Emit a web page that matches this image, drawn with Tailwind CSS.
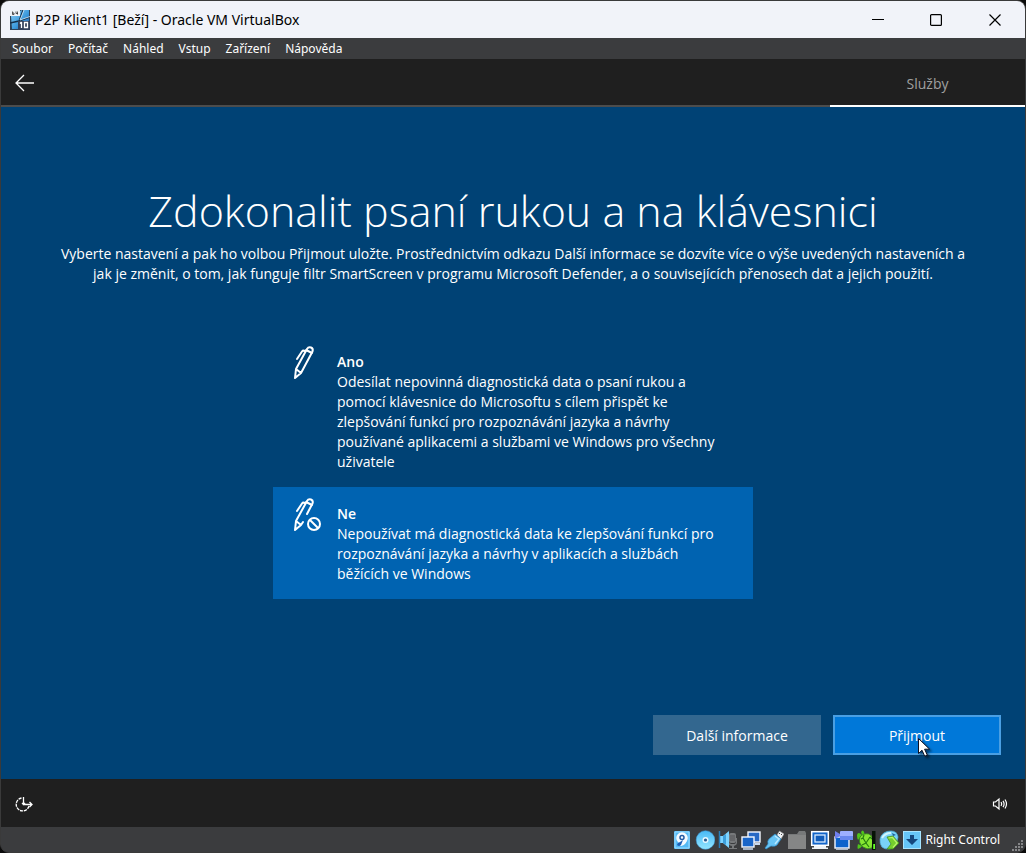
<!DOCTYPE html>
<html lang="cs">
<head>
<meta charset="utf-8">
<meta name="viewport" content="width=device-width, initial-scale=1">
<title>P2P Klient1 [Beží] - Oracle VM VirtualBox</title>
<script src="https://cdn.jsdelivr.net/npm/@tailwindcss/browser@4"></script>
</head>
<body class="bg-[#0c0c0c] font-['Open_Sans','Noto_Sans',sans-serif] text-white">
<div class="flex min-h-screen flex-col overflow-hidden rounded-[9px] border border-[#3a3a3a] bg-[#3b3c3e]">

  <header class="flex h-[37px] shrink-0 items-center bg-[#f1f3f9] text-black">
    <svg class="ml-[9px] size-5" viewBox="0 0 20 20" aria-hidden="true">
      <defs><linearGradient id="win" x1="0" y1="0" x2="1" y2="1"><stop offset="0" stop-color="#8ccdf3"/><stop offset=".55" stop-color="#3d9bdc"/><stop offset="1" stop-color="#1c4f9c"/></linearGradient></defs>
      <rect width="20" height="20" fill="#2d4358"/>
      <path d="M1 6 12 0h7v19H2z" fill="url(#win)"/>
      <path d="M13 0 9 11 12 20M0 13 9 11 20 7" stroke="#14304a" stroke-width="1.300" fill="none"/>
      <path d="M14 0 10 10 20 6.500" stroke="#d9f1ff" stroke-width=".8" fill="none"/>
      <rect width="10" height="6" fill="#eef2f6"/><path d="M2.500 1.500v3M2.500 3h1.500v1.500H2.500M6 1.500v2h2M7.500 1.500v3" stroke="#333" stroke-width=".8" fill="none"/>
      <path d="M8 11h12v9H8z" fill="#33415a"/>
      <path d="M11.500 12v6M10 13.500l1.500-1.500M14.500 12.500h3v5h-3z" stroke="#fff" stroke-width="1.300" fill="none"/>
    </svg>
    <h1 class="ml-[5px] text-[14px] leading-5 whitespace-nowrap font-['Noto_Sans',sans-serif]">P2P Klient1 [Beží] - Oracle VM VirtualBox</h1>
    <div class="ml-auto flex h-full">
      <button class="flex w-[58px] items-center justify-center" aria-label="Minimalizovat"><svg class="size-3" viewBox="0 0 12 12" fill="none" stroke="#000"><path d="M0 5.500h12"/></svg></button>
      <button class="flex w-[58px] items-center justify-center" aria-label="Maximalizovat"><svg class="size-3" viewBox="0 0 12 12" fill="none" stroke="#000" stroke-width="1.200"><rect x=".6" y=".6" width="10.800" height="10.800" rx="1"/></svg></button>
      <button class="flex w-[60px] items-center justify-center" aria-label="Zavřít"><svg class="size-3" viewBox="0 0 12 12" fill="none" stroke="#000" stroke-width="1.200"><path d="m.5.5 11 11M11.500.5l-11 11"/></svg></button>
    </div>
  </header>

  <nav class="flex h-[21px] shrink-0 items-center gap-[15px] bg-[#3b3c3e] pl-[11px] text-[12px] leading-4 font-['Noto_Sans',sans-serif]" aria-label="Nabídka">
    <button>Soubor</button><button>Počítač</button><button>Náhled</button><button>Vstup</button><button>Zařízení</button><button>Nápověda</button>
  </nav>

  <div class="flex h-12 shrink-0 items-stretch bg-[#1f1f1f]">
    <div class="flex flex-1 items-center border-b-2 border-[#4c4c4c] pl-[14px]">
      <button aria-label="Zpět"><svg class="h-5 w-5" viewBox="0 0 20 20" fill="none" stroke="#fff" stroke-width="1.300"><path d="M1 11h18M9 3 1 11l8 8"/></svg></button>
    </div>
    <div class="flex w-[195px] items-center justify-center border-b-2 border-white pt-[3px] text-[14px] leading-5 text-[#a0a0a0]">Služby</div>
  </div>

  <main class="flex flex-1 flex-col bg-[#004275] px-6 pt-[74px] pb-6">
    <h2 class="text-center text-[43px] leading-[60px] font-light">Zdokonalit psaní rukou a na klávesnici</h2>
    <p class="mt-[3px] text-center text-[14px] leading-5">Vyberte nastavení a pak ho volbou Přijmout uložte. Prostřednictvím odkazu Další informace se dozvíte více o výše uvedených nastaveních a<br>jak je změnit, o tom, jak funguje filtr SmartScreen v programu Microsoft Defender, a o souvisejících přenosech dat a jejich použití.</p>

    <div class="mx-auto mt-[50px] w-full max-w-[480px]" role="radiogroup" aria-label="Psaní rukou a na klávesnici">
      <label class="flex items-start gap-4 px-4 pt-[17px] pb-[15px]">
        <input type="radio" name="inking" class="sr-only">
        <svg class="-mt-[6px] h-9 w-8 shrink-0" viewBox="0 0 32 36" fill="none" stroke="#fff" stroke-width="2" stroke-linejoin="round" stroke-linecap="round" aria-hidden="true"><path d="M6 33 7 24 18 4q1.500-2.500 4-1.500t1.500 4L12 28zM7 24l5 4M16 6q-2-1-3 .5L8 14M17 5l6 3"/></svg>
        <span class="pt-[1px] text-[14px] leading-5"><strong class="font-semibold">Ano</strong><br>Odesílat nepovinná diagnostická data o psaní rukou a<br>pomocí klávesnice do Microsoftu s cílem přispět ke<br>zlepšování funkcí pro rozpoznávání jazyka a návrhy<br>používané aplikacemi a službami ve Windows pro všechny<br>uživatele</span>
      </label>
      <label class="flex items-start gap-4 bg-[#0063b1] px-4 pt-4 pb-[15px]">
        <input type="radio" name="inking" class="sr-only" checked>
        <svg class="-mt-[6px] h-9 w-8 shrink-0" viewBox="0 0 32 36" fill="none" stroke="#fff" stroke-width="2" stroke-linejoin="round" stroke-linecap="round" aria-hidden="true"><path d="M14 25 12 28 6 33 7 24 18 4q1.500-2.500 4-1.500t1.500 4L18 17M7 24l5 4M16 6q-2-1-3 .5L8 14M17 5l6 3"/><circle cx="25" cy="27" r="6"/><path d="m21 23 8 8"/></svg>
        <span class="pt-[1px] text-[14px] leading-5"><strong class="font-semibold">Ne</strong><br>Nepoužívat má diagnostická data ke zlepšování funkcí pro<br>rozpoznávání jazyka a návrhy v aplikacích a službách<br>běžících ve Windows</span>
      </label>
    </div>

    <div class="mt-auto flex justify-end gap-3 text-[14px] leading-5">
      <button class="h-10 w-[168px] bg-[#33678f] pt-px">Další informace</button>
      <button class="relative h-10 w-[168px] border-2 border-[#4a9fe3] bg-[#0078d9] pt-px">Přijmout
        <svg class="absolute top-5 left-[82px] h-[22px] w-4 drop-shadow-[2px_2px_1px_rgba(0,0,0,0.5)]" viewBox="0 0 16 22" aria-hidden="true"><path d="M1.500 1.500v15l3.500-3.300 2.700 6 2.600-1.100-2.700-5.900h5z" fill="#fff" stroke="#0c1020"/></svg>
      </button>
    </div>
  </main>

  <div class="flex h-12 shrink-0 items-center justify-between bg-[#1f1f1f] pt-px pr-[17px] pl-[14px]">
    <button aria-label="Usnadnění přístupu"><svg class="h-[18px] w-[18px]" viewBox="0 0 18 18" fill="none" stroke="#fff" stroke-width="1.300"><path d="M14 11A6.500 6.500 0 1 1 6.500 3" stroke-dasharray="3.200 .8"/><path d="M8.500 2v7.500H17M14.500 7l2.500 2.500-2.500 2.500M7 8l1.500 1.500L10 8"/></svg></button>
    <button aria-label="Hlasitost"><svg class="h-4 w-4" viewBox="0 0 16 16" fill="none" stroke="#fff" stroke-width="1.200"><path d="M1.500 6h2L7 3v10l-3.500-3h-2zM9 6.200q1.300 1.800 0 3.600M11 4.800q2.200 3.200 0 6.400M13 3.500q3 4.500 0 9"/></svg></button>
  </div>

  <footer class="flex h-[25px] shrink-0 items-center justify-end gap-[3px] bg-[#3b3c3e] pr-px">
    <svg class="size-5" viewBox="0 0 20 20" aria-label="Pevný disk"><rect x="2" y="1" width="16" height="18" rx="1" fill="#54baf5"/><path d="M3 18V2h14v16z" fill="none" stroke="#9edcff"/><circle cx="10" cy="8" r="5.800" fill="#f5faff"/><path d="M15 10q-1 5-6 6l-3-1 6-6z" fill="#f5faff"/><circle cx="10" cy="7.500" r="2" fill="none" stroke="#235ba5" stroke-width="1.500"/><path d="m11 10-2 5q-2 2-4 0 0-2 3-3z" fill="#1d60b7"/></svg>
    <svg class="size-5" viewBox="0 0 20 20" aria-label="Optický disk"><defs><linearGradient id="cd" x2="0" y2="1"><stop stop-color="#48b9f5"/><stop offset="1" stop-color="#94e6ff"/></linearGradient></defs><circle cx="10.500" cy="10" r="9.300" fill="url(#cd)" stroke="#3b9bdc" stroke-width=".5"/><circle cx="10.500" cy="10" r="3" fill="#e7f8ff"/><circle cx="10.500" cy="10" r="1.600" fill="#285c92"/></svg>
    <svg class="size-5" viewBox="0 0 20 20" aria-label="Zvuk"><g fill="#77797b"><rect x="11" y="3" width="7" height="10" rx="2"/><path d="M10 9v4q0 2 4 3v2h-3v1h8v-1h-3v-2q3-1 3-3V8h-1v4q0 2-3 2-4 0-4-2V9z"/></g><path d="M12 6h5M12 8h5M12 10h5" stroke="#4b4d50" stroke-width=".8"/><path d="M2 6h3l6-5v17l-6-5H2z" fill="#7ed4ff"/><path d="M5 6v7l3 2V4z" fill="#3d9fdb"/><path d="M1.500 1v17" stroke="#287eb9" stroke-width="1.500"/></svg>
    <svg class="size-5" viewBox="0 0 20 20" aria-label="Síť"><rect x="7" y="2" width="12" height="10" fill="#2769c6" stroke="#f5f8ff" stroke-width="1.400"/><path d="M14 14h5" stroke="#c9d9ef" stroke-width="2"/><rect x="1" y="7" width="12" height="10" fill="#1764c8" stroke="#f5f8ff" stroke-width="1.400"/><path d="M2 19h10" stroke="#c9d9ef" stroke-width="1.500"/></svg>
    <svg class="size-5" viewBox="0 0 20 20" aria-label="USB"><path d="m13 5 2.500-4L20 4l-3 5z" fill="#f0f2f4" stroke="#999" stroke-width=".6"/><path d="m15 3 1 1m1 0 1 1" stroke="#444"/><path d="m11 4 6 5-4 6q-2 2-6 1l-5 3-1-1 3-4q-1-3 1-5z" fill="#68c5f5" stroke="#2f8cc9" stroke-width=".7"/><path d="m11 6 4 3-4 5" fill="none" stroke="#b7e8ff" stroke-width="1.500"/></svg>
    <svg class="size-5" viewBox="0 0 20 20" aria-label="Sdílené složky"><path d="M1 19V4h9l2-3h6l1 2v16z" fill="#77797a"/><path d="M1 5h18v14H1z" fill="#858686"/></svg>
    <svg class="size-5" viewBox="0 0 20 20" aria-label="Displej"><rect x="1.700" y="1.700" width="16.600" height="13.600" fill="#1264c9" stroke="#fff" stroke-width="1.500"/><rect x="5" y="5" width="10" height="7" fill="#105bb9" stroke="#d8ebff" stroke-width="1.300"/><path d="M4 16h12v1.500h2V19H2v-1.500h2z" fill="#eef2f6"/></svg>
    <svg class="size-5" viewBox="0 0 20 20" aria-label="Nahrávání"><rect x="2" y="7" width="14" height="11" fill="#0c63cb" stroke="#f4f8ff" stroke-width="1.400"/><path d="M3 19.300h12" stroke="#cad8e8"/><path d="m2 1 5 3v2L2 9z" fill="#7080ee"/><rect x="7" y="1" width="13" height="9" rx="1" fill="#9eafff"/><path d="M7 6h13v4H7z" fill="#6987ee"/></svg>
    <svg class="size-5" viewBox="0 0 20 20" aria-label="Virtualizace"><path d="M1 5Q2 1 6 5L2 10q-1-2-1-5zM15 7h4l-3 5zM5 2Q7-1 8 2l1 3H6zM2 14q-1 4 0 5 3-1 4-3z" fill="#4fc51b"/><path d="M4 7q3-4 9-3 4 2 4 7l-1 7q-5 2-9-1-5-4-3-10z" fill="#86e632" stroke="#30851a" stroke-width=".8"/><path d="m7 8 3 5 4-6M10 13l-4 2M10 13l3 4M5 9l2-1 1-3M14 7l2 2" stroke="#267d10" stroke-width="1.200" fill="none"/><path d="M16 1h3.500v19H16z" fill="#071307"/><path d="M17.200 14h1.800v5h-1.800z" fill="#65ff25"/></svg>
    <svg class="size-5" viewBox="0 0 20 20" aria-label="Integrace myši"><path d="M1 9Q3 1 12 1q6 0 7 6-1 9-8 12Q0 20 1 9z" fill="#79d3f8" stroke="#4eacd9" stroke-width=".7"/><path d="M3 8q3-5 9-5" stroke="#d0f5ff" stroke-width="2" fill="none"/><path d="m13 3 4 2-3 1z" fill="#1c619a"/><path d="m8 7 6-1 6 7-6 6H8l4-5z" fill="#75ce2d" stroke="#3c8b1d" stroke-width=".7"/><path d="m9.500 8 4-.500 4.500 5.500-4 4.500" stroke="#b9f36b" stroke-width="1.200" fill="none"/></svg>
    <svg class="size-5" viewBox="0 0 20 20" aria-label="Klávesnice"><rect x="1" y="1" width="18" height="18" rx="1" fill="#66c5f7"/><rect x="1.500" y="1.500" width="17" height="17" fill="none" stroke="#a7e4ff"/><path d="M8 5h4v4h4l-6 6-6-6h4z" fill="#14477d"/></svg>
    <span class="ml-px pt-px text-[12px] leading-4 whitespace-nowrap font-['Noto_Sans',sans-serif]">Right Control</span>
    <svg class="ml-[9px] size-3 self-end" viewBox="0 0 12 12" fill="#858688" aria-hidden="true"><path d="M9 0h2v2H9zM6 3h2v2H6zM9 3h2v2H9zM3 6h2v2H3zM6 6h2v2H6zM9 6h2v2H9zM0 9h2v2H0zM3 9h2v2H3zM6 9h2v2H6z"/></svg>
  </footer>
</div>
</body>
</html>
